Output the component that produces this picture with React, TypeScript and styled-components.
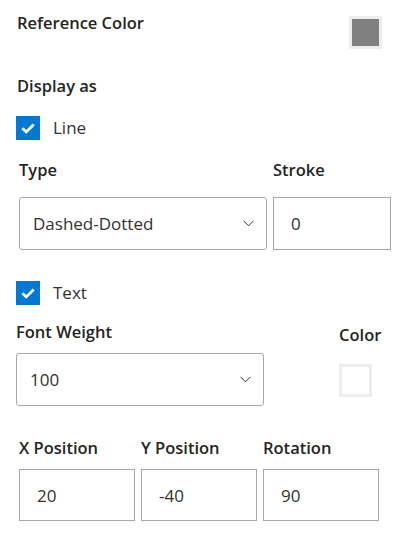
import React from 'react';
import styled, { createGlobalStyle } from 'styled-components';

const GlobalStyle = createGlobalStyle`
    body {
        margin: 0;
        background: #ffffff;
        font-family: 'Open Sans', 'Noto Sans', sans-serif;
        color: #323130;
    }
`;

const Panel = styled.div`
    width: 402px;
    height: 543px;
    padding-top: 12px;
    box-sizing: border-box;
`;

const Section = styled.div<{ inset: number; top: number }>`
    padding-left: ${({ inset }) => inset}px;
    margin-top: ${({ top }) => top}px;
`;

const Label = styled.div<{ drop?: number }>`
    font-size: 16.5px;
    font-weight: 600;
    line-height: 22px;
    color: #252423;
    margin-top: ${({ drop = 0 }) => drop}px;
`;

const HeaderRow = styled.div`
    display: flex;
    justify-content: space-between;
    align-items: flex-start;
    padding: 0 20px 0 17px;
`;

const Swatch = styled.div<{ fill: string }>`
    width: 27px;
    height: 27px;
    border: 3px solid #ededed;
    background: ${({ fill }) => fill};
    margin-top: 4px;
`;

const CheckRow = styled.label`
    display: flex;
    align-items: center;
    gap: 13px;
    padding-left: 16px;
    font-size: 17px;
    line-height: 24px;
`;

const CheckBox = styled.span`
    width: 24px;
    height: 24px;
    background: #0078d4;
    display: flex;
    align-items: center;
    justify-content: center;
`;

const FieldRow = styled.div<{ gap: number }>`
    display: flex;
    gap: ${({ gap }) => gap}px;
    align-items: flex-start;
`;

const Field = styled.div<{ width: number; gap: number }>`
    width: ${({ width }) => width}px;
    display: flex;
    flex-direction: column;
    gap: ${({ gap }) => gap}px;
`;

const Select = styled.div`
    height: 53px;
    box-sizing: border-box;
    border: 1px solid #a8a8a8;
    border-radius: 3px;
    display: flex;
    align-items: center;
    justify-content: space-between;
    padding: 0 12px 0 13px;
    font-size: 17px;
`;

const Input = styled.div<{ tall?: boolean }>`
    height: ${({ tall }) => (tall ? 53 : 52)}px;
    box-sizing: border-box;
    border: 1px solid #a8a8a8;
    display: flex;
    align-items: center;
    padding-left: 17px;
    font-size: 17px;
`;

const Chevron = () => (
    <svg width="11" height="7" viewBox="0 0 11 7">
        <path d="M0.5 0.8 L5.5 5.8 L10.5 0.8" fill="none" stroke="#323130" strokeWidth="1" />
    </svg>
);

const Check = () => (
    <svg width="16" height="16" viewBox="0 0 16 16">
        <path d="M2.3 8.2 L6.2 11.9 L13.7 4.4" fill="none" stroke="#ffffff" strokeWidth="2.8" />
    </svg>
);

const Checkbox = ({ label }: { label: string }) => (
    <CheckRow>
        <CheckBox>
            <Check />
        </CheckBox>
        {label}
    </CheckRow>
);

const App = () => (
    <Panel>
        <GlobalStyle />
        <HeaderRow>
            <Label>Reference Color</Label>
            <Swatch fill="#808080" />
        </HeaderRow>
        <Section inset={17} top={26}>
            <Label>Display as</Label>
        </Section>
        <Section inset={0} top={19}>
            <Checkbox label="Line" />
        </Section>
        <Section inset={19} top={19}>
            <FieldRow gap={6}>
                <Field width={248} gap={16}>
                    <Label>Type</Label>
                    <Select>
                        Dashed-Dotted
                        <Chevron />
                    </Select>
                </Field>
                <Field width={118} gap={16}>
                    <Label>Stroke</Label>
                    <Input tall>0</Input>
                </Field>
            </FieldRow>
        </Section>
        <Section inset={0} top={31}>
            <Checkbox label="Text" />
        </Section>
        <Section inset={16} top={16}>
            <FieldRow gap={75}>
                <Field width={248} gap={10}>
                    <Label>Font Weight</Label>
                    <Select>
                        100
                        <Chevron />
                    </Select>
                </Field>
                <Field width={33} gap={14}>
                    <Label drop={3}>Color</Label>
                    <Swatch fill="#ffffff" />
                </Field>
            </FieldRow>
        </Section>
        <Section inset={19} top={31}>
            <FieldRow gap={6}>
                <Field width={116} gap={10}>
                    <Label>X Position</Label>
                    <Input>20</Input>
                </Field>
                <Field width={116} gap={10}>
                    <Label>Y Position</Label>
                    <Input>-40</Input>
                </Field>
                <Field width={116} gap={10}>
                    <Label>Rotation</Label>
                    <Input>90</Input>
                </Field>
            </FieldRow>
        </Section>
    </Panel>
);

export default App;
